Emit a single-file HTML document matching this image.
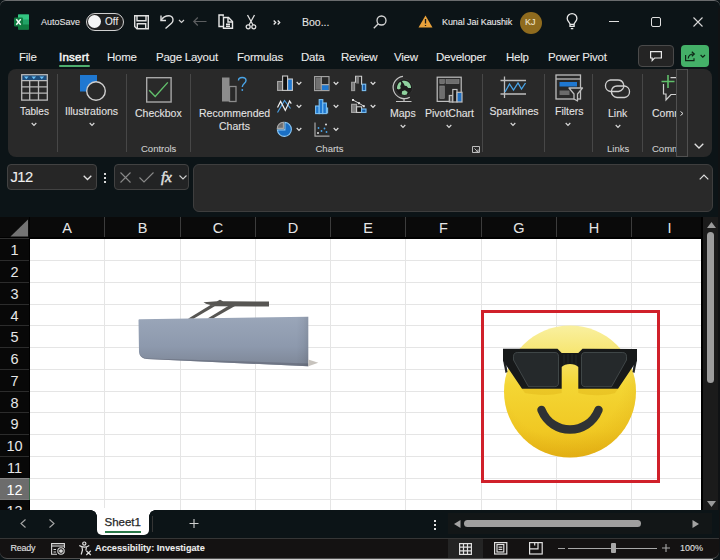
<!DOCTYPE html>
<html><head><meta charset="utf-8">
<style>
*{margin:0;padding:0;box-sizing:border-box}
html,body{width:720px;height:560px;overflow:hidden;background:#0c1417}
body{position:relative;font-family:"Liberation Sans",sans-serif;color:#e8e8e8}
.a{position:absolute}
.t{position:absolute;white-space:nowrap;line-height:1;-webkit-text-stroke:0.08px currentColor}
.h{-webkit-text-stroke:0}
svg{position:absolute;overflow:visible}
</style></head><body>

<!-- window frame -->
<div class="a" style="left:0;top:0;width:720px;height:560px;border-top:1px solid #6a6c6e;border-radius:6px;"></div>
<div class="a" style="left:718px;top:8px;width:2px;height:545px;background:#101214"></div>

<!-- ===== TITLE BAR ===== -->
<svg style="left:14px;top:14px" width="15" height="16" viewBox="0 0 15 16">
  <rect x="4" y="0.5" width="11" height="15" rx="1" fill="#21a366"/>
  <rect x="4" y="0.5" width="11" height="5" fill="#33c481"/>
  <rect x="4" y="10.5" width="11" height="5" fill="#107c41"/>
  <rect x="0" y="3.5" width="9" height="9" rx="1" fill="#107c41"/>
  <path d="M2.3 5.3 L6.7 10.7 M6.7 5.3 L2.3 10.7" stroke="#fff" stroke-width="1.4"/>
</svg>
<div class="t" style="left:41px;top:18px;font-size:9px;color:#e6e6e6">AutoSave</div>
<div class="a" style="left:85.5px;top:13px;width:38.5px;height:18px;border:1.3px solid #d0d0d0;border-radius:9px;background:#1f1f1f"></div>
<div class="a" style="left:88.2px;top:15px;width:13px;height:13px;border-radius:50%;background:#f4f4f4"></div>
<div class="t" style="left:105px;top:17px;font-size:10px;color:#ececec">Off</div>
<!-- save -->
<svg style="left:134px;top:15px" width="15" height="15" viewBox="0 0 15 15" fill="none" stroke="#e0e0e0" stroke-width="1.4">
  <path d="M0.7 0.7 H14.3 V13.8 H3 L0.7 11.5 Z"/><path d="M3 0.7 V5.8 H12 V0.7"/><path d="M3.3 13.8 V8.8 H11.7 V13.8"/>
</svg>
<!-- undo -->
<svg style="left:159px;top:14px" width="16" height="16" viewBox="0 0 16 16" fill="none" stroke="#e0e0e0" stroke-width="1.4">
  <path d="M2 1.5 V6.5 H7"/><path d="M2 6.5 C4 3 7 1.8 10 1.8 C12.5 1.8 14 3.8 14 6 C14 7.5 13.3 8.5 12.5 9.3 L6.5 14.5"/>
</svg>
<svg style="left:178px;top:19px" width="7" height="5" viewBox="0 0 7 5" fill="none" stroke="#d0d0d0" stroke-width="1.2"><path d="M1 1 L3.5 3.5 L6 1"/></svg>
<!-- back arrow -->
<svg style="left:193px;top:17px" width="14" height="9" viewBox="0 0 14 9" fill="none" stroke="#5c5e60" stroke-width="1.2"><path d="M0.8 4.5 H13.5 M4.8 0.5 L0.8 4.5 L4.8 8.5"/></svg>
<!-- copy -->
<svg style="left:218px;top:14px" width="16" height="16" viewBox="0 0 16 16" fill="none" stroke="#e8e8e8" stroke-width="1.4">
  <path d="M5.2 2.6 V1 H1 V12.5 H5"/><path d="M5.5 3.5 H10.5 L14.5 7.5 V14.3 H5.5 Z"/><path d="M8 10.3 H12 M8 12.3 H12"/><path d="M10 3.5 V8 H14.5"/>
</svg>
<!-- scissors -->
<svg style="left:245px;top:14px" width="12" height="16" viewBox="0 0 12 16" fill="none" stroke="#e0e0e0" stroke-width="1.3">
  <path d="M2.5 1 L8 11 M9.5 1 L4 11"/><circle cx="3.2" cy="12.8" r="2"/><circle cx="8.8" cy="12.8" r="2"/>
</svg>
<svg style="left:273px;top:20px" width="8" height="5" viewBox="0 0 8 5" fill="none" stroke="#e8e8e8" stroke-width="1.3"><path d="M0.7 0.5 L2.7 2.5 L0.7 4.5 M4.7 0.5 L6.7 2.5 L4.7 4.5"/></svg>
<div class="t" style="left:302px;top:17px;font-size:10.5px;color:#e6e6e6">Boo...</div>
<!-- search -->
<svg style="left:373px;top:15px" width="14" height="14" viewBox="0 0 14 14" fill="none" stroke="#d6d6d6" stroke-width="1.3">
  <circle cx="8.5" cy="5.5" r="4.5"/><path d="M5.3 8.7 L0.8 13.2"/>
</svg>
<!-- warning -->
<svg style="left:418px;top:15px" width="15" height="13" viewBox="0 0 15 13">
  <path d="M7.5 0.5 L14.5 12.5 H0.5 Z" fill="#e9a23b"/><path d="M7.5 4 V8.5 M7.5 10 V11" stroke="#1a1a1a" stroke-width="1.3"/>
</svg>
<div class="t" style="left:442px;top:17.5px;font-size:9px;color:#ececec;letter-spacing:-0.08px">Kunal Jai Kaushik</div>
<div class="a" style="left:520px;top:11.5px;width:22px;height:22px;border-radius:50%;background:#8f6b1e"></div>
<div class="t" style="left:525px;top:18px;font-size:9px;color:#f0e6d0">KJ</div>
<!-- bulb -->
<svg style="left:565px;top:12px" width="14" height="18" viewBox="565 12 14 18" fill="none" stroke="#e8e8e8" stroke-width="1.3">
  <path d="M570 26.3 V24.2 C570 22.6 567.2 21.2 567.2 18.4 A4.85 4.85 0 0 1 576.9 18.4 C576.9 21.2 574.1 22.6 574.1 24.2 V26.3 Z"/>
  <path d="M570 24.4 H574.1"/><path d="M570.8 28.6 H573.3"/>
</svg>
<!-- min / max / close -->
<div class="a" style="left:608.5px;top:20.6px;width:10px;height:1.4px;background:#e0e0e0"></div>
<div class="a" style="left:651px;top:17px;width:10px;height:9.5px;border:1.5px solid #e0e0e0;border-radius:2px"></div>
<svg style="left:693px;top:17px" width="10" height="10" viewBox="0 0 10 10" fill="none" stroke="#d8d8d8" stroke-width="1.1"><path d="M0.5 0.5 L9.5 9.5 M9.5 0.5 L0.5 9.5"/></svg>

<!-- ===== TABS ===== -->
<div class="t" style="left:19px;top:52px;font-size:11.5px;color:#ececec;letter-spacing:-0.25px">File</div>
<div class="t" style="left:59px;top:52px;font-size:11.5px;color:#f4f4f4;-webkit-text-stroke:0.5px #f4f4f4;letter-spacing:0.25px">Insert</div>
<div class="a" style="left:59px;top:65px;width:31px;height:2px;background:#4fae6f;border-radius:1px"></div>
<div class="t" style="left:107px;top:52px;font-size:11.5px;color:#ececec;letter-spacing:-0.25px">Home</div>
<div class="t" style="left:156px;top:52px;font-size:11.5px;color:#ececec;letter-spacing:-0.25px">Page Layout</div>
<div class="t" style="left:237px;top:52px;font-size:11.5px;color:#ececec;letter-spacing:-0.25px">Formulas</div>
<div class="t" style="left:301px;top:52px;font-size:11.5px;color:#ececec;letter-spacing:-0.25px">Data</div>
<div class="t" style="left:341px;top:52px;font-size:11.5px;color:#ececec;letter-spacing:-0.25px">Review</div>
<div class="t" style="left:394px;top:52px;font-size:11.5px;color:#ececec;letter-spacing:-0.25px">View</div>
<div class="t" style="left:436px;top:52px;font-size:11.5px;color:#ececec;letter-spacing:-0.25px">Developer</div>
<div class="t" style="left:506px;top:52px;font-size:11.5px;color:#ececec;letter-spacing:-0.25px">Help</div>
<div class="t" style="left:548px;top:52px;font-size:11.5px;color:#ececec;letter-spacing:-0.25px">Power Pivot</div>
<!-- comment btn -->
<div class="a" style="left:638px;top:45px;width:36px;height:22px;border:1px solid #4a4a4a;border-radius:4px;background:#242424"></div>
<svg style="left:650px;top:51px" width="12" height="11" viewBox="0 0 12 11" fill="none" stroke="#e8e8e8" stroke-width="1.2"><path d="M0.6 0.6 H11.4 V7 H4.5 L2.2 9.5 V7 H0.6 Z"/></svg>
<!-- share btn -->
<div class="a" style="left:681px;top:45px;width:28px;height:22px;border-radius:4px;background:#44b068"></div>
<svg style="left:684px;top:50px" width="24" height="14" viewBox="684 50 24 14" fill="none" stroke="#0e2616" stroke-width="1.2">
  <path d="M685.6 55 V60.6 H694 V58.2"/><path d="M688.2 58.5 C688.5 55.5 690.5 54 693.8 54"/><path d="M691.8 51.8 L694.3 54 L691.8 56.2"/><path d="M700.6 55 L702.8 57.2 L705 55"/>
</svg>

<!-- ===== RIBBON ===== -->
<div class="a" style="left:8px;top:69px;width:704px;height:88px;background:#292929;border-radius:8px"></div>


<!-- separators -->
<div class="a" style="left:57px;top:74px;width:1px;height:78px;background:#474747"></div>
<div class="a" style="left:126px;top:74px;width:1px;height:78px;background:#474747"></div>
<div class="a" style="left:190px;top:74px;width:1px;height:78px;background:#474747"></div>
<div class="a" style="left:482px;top:74px;width:1px;height:78px;background:#474747"></div>
<div class="a" style="left:544px;top:74px;width:1px;height:78px;background:#474747"></div>
<div class="a" style="left:592px;top:74px;width:1px;height:78px;background:#474747"></div>
<div class="a" style="left:642px;top:74px;width:1px;height:78px;background:#474747"></div>

<!-- Tables -->
<svg style="left:21px;top:74px" width="27" height="27" viewBox="0 0 27 27" fill="none" stroke="#bababa" stroke-width="1.3">
  <rect x="1.2" y="1.2" width="5" height="5" fill="#1d4d7c" stroke="none"/>
  <rect x="1.2" y="1.2" width="24.6" height="5.3" fill="#1d4d7c" stroke="none"/>
  <path d="M3 2.6 H7.6 L5.3 5.2 Z M10.5 2.6 H15.1 L12.8 5.2 Z M18.5 2.6 H23.1 L20.8 5.2 Z" fill="#6cc0f5" stroke="none"/>
  <rect x="0.7" y="0.7" width="25.6" height="25.4"/>
  <path d="M0.7 6.6 H26.3 M0.7 12.8 H26.3 M0.7 19.2 H26.3 M8.7 6.6 V26 M17.5 6.6 V26"/>
</svg>
<div class="t" style="left:20px;top:107px;font-size:10px;color:#e4e4e4">Tables</div>
<svg style="left:31px;top:122px" width="6" height="5" viewBox="0 0 6 5" fill="none" stroke="#d8d8d8" stroke-width="1.2"><path d="M0.7 1 L3 3.3 L5.3 1"/></svg>

<!-- Illustrations -->
<svg style="left:79px;top:74px" width="28" height="28" viewBox="0 0 28 28">
  <rect x="1" y="1" width="17" height="16.5" fill="#1f78d1"/>
  <circle cx="17" cy="17" r="9.3" fill="#292929" stroke="#cfcfcf" stroke-width="1.4"/>
</svg>
<div class="t" style="left:65px;top:106px;font-size:10.5px;color:#e4e4e4">Illustrations</div>
<svg style="left:89px;top:122px" width="6" height="5" viewBox="0 0 6 5" fill="none" stroke="#d8d8d8" stroke-width="1.2"><path d="M0.7 1 L3 3.3 L5.3 1"/></svg>

<!-- Checkbox -->
<svg style="left:146px;top:77px" width="26" height="26" viewBox="0 0 26 26" fill="none">
  <rect x="0.7" y="0.7" width="24.4" height="24.3" stroke="#a8a8a8" stroke-width="1.4"/>
  <path d="M3.2 13.2 L9.2 19.4 L21.8 5.4" stroke="#62c06c" stroke-width="1.4"/>
</svg>
<div class="t" style="left:135px;top:107.5px;font-size:10.5px;color:#e4e4e4">Checkbox</div>
<div class="t" style="left:141px;top:144px;font-size:9.5px;color:#cfcfcf">Controls</div>

<!-- Recommended charts -->
<svg style="left:221px;top:76px" width="28" height="27" viewBox="0 0 28 27">
  <rect x="1" y="1.5" width="7.5" height="24" fill="#8c8c8c"/>
  <rect x="8.5" y="10.5" width="6.5" height="15" fill="#292929" stroke="#8c8c8c" stroke-width="1.3"/>
  <path d="M17.5 4.5 C17.5 0.5 25 0.5 25 4.5 C25 7.5 21.3 7.5 21.3 11" fill="none" stroke="#4aa5e8" stroke-width="1.4"/>
  <circle cx="21.3" cy="14" r="0.9" fill="#4aa5e8"/>
</svg>
<div class="t" style="left:199px;top:107.5px;font-size:10.5px;color:#e4e4e4">Recommended</div>
<div class="t" style="left:219px;top:121px;font-size:10.5px;color:#e4e4e4">Charts</div>

<!-- small chart icons -->
<svg style="left:277px;top:75px" width="16" height="16" viewBox="0 0 16 16" stroke-width="1.1">
  <rect x="0.6" y="6.5" width="5" height="8.9" fill="#6b6b6b" stroke="#a8a8a8"/>
  <rect x="5.6" y="1" width="5" height="14.4" fill="#111" stroke="#c8c8c8"/>
  <rect x="10.6" y="4" width="4.8" height="11.4" fill="#1f78d1" stroke="#c8c8c8"/>
</svg>
<svg style="left:314px;top:76px" width="16" height="16" viewBox="0 0 16 16" stroke-width="1.1">
  <rect x="0.6" y="0.6" width="14.4" height="14" fill="#292929" stroke="#a8a8a8"/>
  <rect x="1.5" y="1.5" width="5.5" height="12.2" fill="#707070"/>
  <rect x="7.6" y="9" width="6.8" height="5" fill="#1f78d1"/>
  <path d="M7.3 0.6 V14.6 M7.3 8.6 H15" stroke="#a8a8a8" fill="none"/>
</svg>
<svg style="left:350px;top:75px" width="17" height="17" viewBox="350 75 17 17" stroke-width="1.1">
  <rect x="351.6" y="82.3" width="3" height="8.3" fill="#7a7a7a" stroke="#9a9a9a"/>
  <path d="M354.6 82.3 H355.6 V76.2 H361.6 V84.2 H362.3" fill="none" stroke="#d0d0d0"/>
  <rect x="356.2" y="76.8" width="2.8" height="6.8" fill="#7a7a7a"/>
  <rect x="362.3" y="84.2" width="3.4" height="6.4" fill="#1b5ea8" stroke="#7cc0f2"/>
</svg>
<svg style="left:276px;top:98px" width="17" height="16" viewBox="0 0 17 16" fill="none" stroke-width="1.2">
  <path d="M1.5 14.5 L8.5 2.5 L14.5 10.5" stroke="#4a9ee0"/>
  <path d="M1.5 9.5 L4.6 3.4 L9.3 12.4 L13.6 3 L15.3 5.6" stroke="#f0f0f0"/>
</svg>
<svg style="left:315px;top:98.5px" width="13" height="15" viewBox="0 0 13 15" stroke-width="1.1">
  <rect x="0.6" y="7" width="3.6" height="7.6" fill="#1f78d1" stroke="#7cc0f2"/>
  <rect x="4.2" y="0.6" width="3.6" height="14" fill="#1f78d1" stroke="#7cc0f2"/>
  <rect x="7.8" y="4" width="3.6" height="10.6" fill="#1f78d1" stroke="#7cc0f2"/>
  <path d="M11.4 9 H12.6 V14.6" fill="none" stroke="#7cc0f2"/>
</svg>
<svg style="left:350px;top:98px" width="17" height="16" viewBox="350 98 17 16" stroke-width="1.1">
  <rect x="351.6" y="104.3" width="5" height="8.1" fill="#7a7a7a" stroke="#a8a8a8"/>
  <rect x="356.6" y="106.8" width="5" height="5.6" fill="#141414" stroke="#d0d0d0"/>
  <rect x="361.6" y="109" width="4.4" height="3.4" fill="#1b5ea8" stroke="#7cc0f2"/>
  <path d="M353 100 L359 103.2 L363.8 106.2" fill="none" stroke="#d8d8d8" stroke-width="1"/>
  <rect x="352" y="99" width="2" height="2" fill="#e0e0e0"/><rect x="358" y="102.2" width="2" height="2" fill="#e0e0e0"/><rect x="362.8" y="105.2" width="2" height="2" fill="#e0e0e0"/>
</svg>
<svg style="left:276px;top:121px" width="17" height="17" viewBox="0 0 17 17" stroke-width="1.1">
  <path d="M8.9 1.4 A7 7 0 1 1 1.4 8.9 H8.9 Z" fill="#1a6fc4" stroke="#8cc8f5"/>
  <path d="M7.4 7.4 V1.3 A6.2 6.2 0 0 0 1.3 7.4 Z" fill="#6e6e6e" stroke="#a8a8a8"/>
</svg>
<svg style="left:314px;top:121.5px" width="16" height="15" viewBox="0 0 16 15" fill="none">
  <path d="M1 0.5 V14.2 H15.5" stroke="#a8a8a8" stroke-width="1.2"/>
  <circle cx="4.5" cy="6" r="0.9" fill="#4aa5e8"/><circle cx="7.5" cy="9" r="0.9" fill="#4aa5e8"/>
  <circle cx="10.5" cy="6.5" r="0.9" fill="#4aa5e8"/><circle cx="12.5" cy="10" r="0.9" fill="#4aa5e8"/>
  <circle cx="12" cy="2.5" r="1" fill="#e0e0e0"/><circle cx="4" cy="11" r="1" fill="#e0e0e0"/>
</svg>
<!-- small chevrons -->
<svg style="left:296px;top:80.5px" width="6" height="5" viewBox="0 0 6 5" fill="none" stroke="#e0e0e0" stroke-width="1.2"><path d="M0.7 1 L3 3.3 L5.3 1"/></svg>
<svg style="left:333px;top:80.5px" width="6" height="5" viewBox="0 0 6 5" fill="none" stroke="#e0e0e0" stroke-width="1.2"><path d="M0.7 1 L3 3.3 L5.3 1"/></svg>
<svg style="left:370px;top:80.5px" width="6" height="5" viewBox="0 0 6 5" fill="none" stroke="#e0e0e0" stroke-width="1.2"><path d="M0.7 1 L3 3.3 L5.3 1"/></svg>
<svg style="left:296px;top:103.5px" width="6" height="5" viewBox="0 0 6 5" fill="none" stroke="#e0e0e0" stroke-width="1.2"><path d="M0.7 1 L3 3.3 L5.3 1"/></svg>
<svg style="left:333px;top:103.5px" width="6" height="5" viewBox="0 0 6 5" fill="none" stroke="#e0e0e0" stroke-width="1.2"><path d="M0.7 1 L3 3.3 L5.3 1"/></svg>
<svg style="left:370px;top:103.5px" width="6" height="5" viewBox="0 0 6 5" fill="none" stroke="#e0e0e0" stroke-width="1.2"><path d="M0.7 1 L3 3.3 L5.3 1"/></svg>
<svg style="left:296px;top:126.5px" width="6" height="5" viewBox="0 0 6 5" fill="none" stroke="#e0e0e0" stroke-width="1.2"><path d="M0.7 1 L3 3.3 L5.3 1"/></svg>
<svg style="left:333px;top:126.5px" width="6" height="5" viewBox="0 0 6 5" fill="none" stroke="#e0e0e0" stroke-width="1.2"><path d="M0.7 1 L3 3.3 L5.3 1"/></svg>
<div class="t" style="left:315.5px;top:144px;font-size:9.5px;color:#cfcfcf">Charts</div>

<!-- Maps -->
<svg style="left:388px;top:72px" width="30" height="32" viewBox="388 72 30 32">
  <circle cx="404" cy="87.5" r="8.6" fill="#1c1c1c" stroke="#3a3a3a" stroke-width="0.6"/>
  <g transform="translate(404 87.5) scale(0.85) translate(-404 -87.5)">
  <path d="M401.5 80 C403 79.3 406 79.3 408 80.3 L410 82 C411.5 84 412.3 86 412.3 88 L409 88 L407 85.8 L404.8 85.3 L403.8 83 Z" fill="#8fd19e"/>
  <path d="M396.3 85 C397 83 398.5 81.5 400 80.8 L400.8 83 L399.5 86 L400.3 88.3 L398 89.8 L395.8 89 C395.6 87.5 395.8 86 396.3 85 Z" fill="#8fd19e"/>
  <path d="M401.8 91.8 L405 90.8 L408.3 92.8 L407.3 95.8 C405.5 96.5 403 96.3 401.3 95.5 Z" fill="#8fd19e"/>
  </g>
  <path d="M403 76.3 A11.2 11.2 0 1 0 409.8 97.2 M404 98.8 V101.5 M396 101.5 H411.5" fill="none" stroke="#c4c4c4" stroke-width="1.2"/>
</svg>
<div class="t" style="left:390px;top:108px;font-size:10.5px;color:#e4e4e4">Maps</div>
<svg style="left:399.5px;top:123.5px" width="6" height="5" viewBox="0 0 6 5" fill="none" stroke="#d8d8d8" stroke-width="1.2"><path d="M0.7 1 L3 3.3 L5.3 1"/></svg>

<!-- PivotChart -->
<svg style="left:436px;top:76px" width="28" height="28" viewBox="436 76 28 28" stroke-width="1.2">
  <rect x="437.2" y="77.2" width="24" height="24.2" fill="none" stroke="#c0c0c0"/>
  <rect x="439.8" y="79.6" width="4.5" height="4" fill="#6e6e6e" stroke="#8a8a8a" stroke-width="0.6"/>
  <rect x="446" y="79.6" width="13" height="4" fill="#6e6e6e" stroke="#8a8a8a" stroke-width="0.6"/>
  <rect x="439.8" y="86" width="4.5" height="12.5" fill="#6e6e6e" stroke="#8a8a8a" stroke-width="0.6"/>
  <rect x="449.3" y="95.5" width="3.5" height="6.5" fill="#5a5a5a" stroke="#c0c0c0"/>
  <rect x="452.8" y="89.5" width="4.2" height="12.5" fill="#1a1a1a" stroke="#c0c0c0"/>
  <rect x="457" y="92.3" width="5" height="9.7" fill="#1f6fc2" stroke="#c0c0c0"/>
</svg>
<div class="t" style="left:425px;top:108px;font-size:10.5px;color:#e4e4e4">PivotChart</div>
<svg style="left:446px;top:124px" width="6" height="5" viewBox="0 0 6 5" fill="none" stroke="#d8d8d8" stroke-width="1.2"><path d="M0.7 1 L3 3.3 L5.3 1"/></svg>
<svg style="left:471.5px;top:145.5px" width="8" height="7" viewBox="0 0 8 7" fill="none" stroke="#bdbdbd" stroke-width="1"><path d="M0.5 6.5 V0.5 H7.5 V6.5 Z M2.5 2.5 L6 6 M6 3.5 V6 H3.5"/></svg>

<!-- Sparklines -->
<svg style="left:500px;top:76px" width="27" height="23" viewBox="0 0 27 23" fill="none" stroke-width="1.3">
  <path d="M0.5 4.5 H26 M0.5 18 H26 M4.5 0.5 V22" stroke="#bdbdbd"/>
  <path d="M5 16 L9.5 8 L13.5 14 L18 7 L21.5 13 L25.5 7" stroke="#4aa5e8"/>
</svg>
<div class="t" style="left:489.5px;top:106px;font-size:10.5px;color:#e4e4e4">Sparklines</div>
<svg style="left:510px;top:122px" width="6" height="5" viewBox="0 0 6 5" fill="none" stroke="#d8d8d8" stroke-width="1.2"><path d="M0.7 1 L3 3.3 L5.3 1"/></svg>

<!-- Filters -->
<svg style="left:555px;top:74px" width="29" height="28" viewBox="0 0 29 28" stroke-width="1.3">
  <rect x="1" y="1" width="24.5" height="24" fill="none" stroke="#bdbdbd"/>
  <path d="M1 5 H25.5" stroke="#bdbdbd"/>
  <rect x="4.5" y="8" width="17.5" height="4.5" fill="#1f78d1"/>
  <rect x="4.5" y="16.5" width="10" height="4.5" fill="#6b6b6b"/>
  <path d="M14 14 H27.5 L22.5 20 V27 L19 25 V20 Z" fill="#292929" stroke="#bdbdbd" stroke-linejoin="round"/>
</svg>
<div class="t" style="left:555px;top:106px;font-size:10.5px;color:#e4e4e4">Filters</div>
<svg style="left:565px;top:122px" width="6" height="5" viewBox="0 0 6 5" fill="none" stroke="#d8d8d8" stroke-width="1.2"><path d="M0.7 1 L3 3.3 L5.3 1"/></svg>

<!-- Link -->
<svg style="left:604px;top:79px" width="28" height="20" viewBox="0 0 28 20" fill="none" stroke="#d0d0d0" stroke-width="1.3">
  <path d="M10 12.5 H6.5 A5.8 5.8 0 0 1 6.5 1 H14 A5.8 5.8 0 0 1 19.5 5"/>
  <path d="M14 7 H20.5 A5.8 5.8 0 0 1 20.5 18.5 H13 A5.8 5.8 0 0 1 7.5 12"/>
  <path d="M10 12.5 H14.5 A5.8 5.8 0 0 0 19.5 5"/>
  <path d="M14 7 H13 A5.8 5.8 0 0 0 7.5 12"/>
</svg>
<div class="t" style="left:608px;top:108px;font-size:10.5px;color:#e4e4e4">Link</div>
<svg style="left:614.5px;top:123.5px" width="6" height="5" viewBox="0 0 6 5" fill="none" stroke="#d8d8d8" stroke-width="1.2"><path d="M0.7 1 L3 3.3 L5.3 1"/></svg>
<div class="t" style="left:607px;top:144px;font-size:9.5px;color:#cfcfcf">Links</div>

<!-- Comments -->
<svg style="left:660px;top:74px" width="20" height="28" viewBox="0 0 20 28" fill="none" stroke-width="1.4">
  <path d="M3.5 10 V20 H6 V26 L11 20.5 H16 M10.5 3.7 H16" stroke="#d0d0d0" stroke-width="1.2"/>
  <path d="M8 1 V14 M1.5 7.5 H14.5" stroke="#5fbf6a" stroke-width="1.6"/>
</svg>
<div class="t" style="left:652px;top:108px;font-size:10.5px;color:#e4e4e4">Comm</div>
<div class="t" style="left:652px;top:144px;font-size:9.5px;color:#cfcfcf">Comm</div>
<!-- ribbon scroll -->
<div class="a" style="left:676px;top:69px;width:12px;height:88px;background:#2b2b2b;border:1px solid #505050"></div>
<svg style="left:680px;top:111px" width="4" height="5" viewBox="0 0 4 5" fill="none" stroke="#e0e0e0" stroke-width="1"><path d="M0.5 0.5 L3 2.5 L0.5 4.5"/></svg>
<svg style="left:694px;top:142.5px" width="10" height="6" viewBox="0 0 10 6" fill="none" stroke="#e0e0e0" stroke-width="1.3"><path d="M0.7 0.7 L5 5 L9.3 0.7"/></svg>


<!-- ===== FORMULA BAR ===== -->
<div class="a" style="left:7px;top:164px;width:90px;height:26px;background:#262626;border:1px solid #424242;border-radius:4px"></div>
<div class="t" style="left:10.5px;top:170px;font-size:14.8px;color:#f0f0f0;letter-spacing:-0.6px">J12</div>
<svg style="left:83px;top:175px" width="9" height="6" viewBox="0 0 9 6" fill="none" stroke="#e0e0e0" stroke-width="1.3"><path d="M0.7 0.7 L4.5 4.5 L8.3 0.7"/></svg>
<div class="a" style="left:104px;top:173px;width:2px;height:2px;background:#d8d8d8"></div>
<div class="a" style="left:104px;top:177px;width:2px;height:2px;background:#d8d8d8"></div>
<div class="a" style="left:104px;top:181px;width:2px;height:2px;background:#d8d8d8"></div>
<div class="a" style="left:114px;top:164px;width:75px;height:26px;background:#222324;border:1px solid #424242;border-radius:4px"></div>
<svg style="left:120px;top:172px" width="11" height="11" viewBox="0 0 11 11" fill="none" stroke="#8a8a8a" stroke-width="1.1"><path d="M0.5 0.5 L10.5 10.5 M10.5 0.5 L0.5 10.5"/></svg>
<svg style="left:139px;top:172px" width="15" height="11" viewBox="0 0 15 11" fill="none" stroke="#8a8a8a" stroke-width="1.1"><path d="M0.5 5.5 L5 10 L14.5 0.5"/></svg>
<div class="t" style="left:161px;top:168.5px;font-size:15.5px;font-family:'Liberation Serif',serif;font-style:italic;color:#e0e0e0;letter-spacing:-0.2px;-webkit-text-stroke:0.45px #e0e0e0">fx</div>
<svg style="left:179px;top:175px" width="8" height="5" viewBox="0 0 8 5" fill="none" stroke="#d0d0d0" stroke-width="1.1"><path d="M0.5 0.5 L4 4 L7.5 0.5"/></svg>
<div class="a" style="left:193px;top:164px;width:520px;height:48px;background:#292929;border:1px solid #3e3e3e;border-radius:6px"></div>
<svg style="left:699px;top:174px" width="10" height="6" viewBox="0 0 10 6" fill="none" stroke="#e0e0e0" stroke-width="1.2"><path d="M0.7 5.3 L5 1 L9.3 5.3"/></svg>

<!-- ===== GRID ===== -->
<div class="a" style="left:0;top:217px;width:701px;height:22px;background:#0a0a0a"></div>
<div class="a" style="left:0;top:237px;width:701px;height:2px;background:#000"></div>
<div class="a" style="left:0;top:238px;width:29px;height:1px;background:#303030"></div>
<div class="a" style="left:0;top:239px;width:30px;height:271px;background:#080808"></div>
<div class="a" style="left:29px;top:217px;width:1px;height:293px;background:#000"></div>
<div class="a" style="left:30px;top:239px;width:671px;height:271px;background:#fff"></div>
<svg style="left:10px;top:219px" width="19" height="18" viewBox="0 0 19 18"><path d="M18 0.5 V17.5 H0.5 Z" fill="#737373"/></svg>
<div class="a" style="left:701px;top:217px;width:2px;height:293px;background:#000"></div>
<div class="a" style="left:703px;top:217px;width:15px;height:293px;background:#1b1b1b"></div>

<div class="a" style="left:104px;top:217px;width:1px;height:20px;background:#3c3c3c"></div>
<div class="a" style="left:104px;top:239px;width:1px;height:271px;background:#e5e5e5"></div>
<div class="a" style="left:180px;top:217px;width:1px;height:20px;background:#3c3c3c"></div>
<div class="a" style="left:180px;top:239px;width:1px;height:271px;background:#e5e5e5"></div>
<div class="a" style="left:255px;top:217px;width:1px;height:20px;background:#3c3c3c"></div>
<div class="a" style="left:255px;top:239px;width:1px;height:271px;background:#e5e5e5"></div>
<div class="a" style="left:330px;top:217px;width:1px;height:20px;background:#3c3c3c"></div>
<div class="a" style="left:330px;top:239px;width:1px;height:271px;background:#e5e5e5"></div>
<div class="a" style="left:405px;top:217px;width:1px;height:20px;background:#3c3c3c"></div>
<div class="a" style="left:405px;top:239px;width:1px;height:271px;background:#e5e5e5"></div>
<div class="a" style="left:481px;top:217px;width:1px;height:20px;background:#3c3c3c"></div>
<div class="a" style="left:481px;top:239px;width:1px;height:271px;background:#e5e5e5"></div>
<div class="a" style="left:556px;top:217px;width:1px;height:20px;background:#3c3c3c"></div>
<div class="a" style="left:556px;top:239px;width:1px;height:271px;background:#e5e5e5"></div>
<div class="a" style="left:631px;top:217px;width:1px;height:20px;background:#3c3c3c"></div>
<div class="a" style="left:631px;top:239px;width:1px;height:271px;background:#e5e5e5"></div>
<div class="t h" style="left:30px;top:221px;width:74px;text-align:center;font-size:14.5px;color:#e6e6e6">A</div>
<div class="t h" style="left:105px;top:221px;width:75px;text-align:center;font-size:14.5px;color:#e6e6e6">B</div>
<div class="t h" style="left:181px;top:221px;width:74px;text-align:center;font-size:14.5px;color:#e6e6e6">C</div>
<div class="t h" style="left:256px;top:221px;width:74px;text-align:center;font-size:14.5px;color:#e6e6e6">D</div>
<div class="t h" style="left:331px;top:221px;width:74px;text-align:center;font-size:14.5px;color:#e6e6e6">E</div>
<div class="t h" style="left:406px;top:221px;width:75px;text-align:center;font-size:14.5px;color:#e6e6e6">F</div>
<div class="t h" style="left:482px;top:221px;width:74px;text-align:center;font-size:14.5px;color:#e6e6e6">G</div>
<div class="t h" style="left:557px;top:221px;width:74px;text-align:center;font-size:14.5px;color:#e6e6e6">H</div>
<div class="t h" style="left:632px;top:221px;width:75px;text-align:center;font-size:14.5px;color:#e6e6e6">I</div>
<div class="a" style="left:30px;top:260px;width:671px;height:1px;background:#e5e5e5"></div>
<div class="a" style="left:0;top:260px;width:29px;height:1px;background:#2c2c2c"></div>
<div class="a" style="left:30px;top:282px;width:671px;height:1px;background:#e5e5e5"></div>
<div class="a" style="left:0;top:282px;width:29px;height:1px;background:#2c2c2c"></div>
<div class="a" style="left:30px;top:304px;width:671px;height:1px;background:#e5e5e5"></div>
<div class="a" style="left:0;top:304px;width:29px;height:1px;background:#2c2c2c"></div>
<div class="a" style="left:30px;top:325px;width:671px;height:1px;background:#e5e5e5"></div>
<div class="a" style="left:0;top:325px;width:29px;height:1px;background:#2c2c2c"></div>
<div class="a" style="left:30px;top:347px;width:671px;height:1px;background:#e5e5e5"></div>
<div class="a" style="left:0;top:347px;width:29px;height:1px;background:#2c2c2c"></div>
<div class="a" style="left:30px;top:369px;width:671px;height:1px;background:#e5e5e5"></div>
<div class="a" style="left:0;top:369px;width:29px;height:1px;background:#2c2c2c"></div>
<div class="a" style="left:30px;top:391px;width:671px;height:1px;background:#e5e5e5"></div>
<div class="a" style="left:0;top:391px;width:29px;height:1px;background:#2c2c2c"></div>
<div class="a" style="left:30px;top:412px;width:671px;height:1px;background:#e5e5e5"></div>
<div class="a" style="left:0;top:412px;width:29px;height:1px;background:#2c2c2c"></div>
<div class="a" style="left:30px;top:434px;width:671px;height:1px;background:#e5e5e5"></div>
<div class="a" style="left:0;top:434px;width:29px;height:1px;background:#2c2c2c"></div>
<div class="a" style="left:30px;top:456px;width:671px;height:1px;background:#e5e5e5"></div>
<div class="a" style="left:0;top:456px;width:29px;height:1px;background:#2c2c2c"></div>
<div class="a" style="left:30px;top:478px;width:671px;height:1px;background:#e5e5e5"></div>
<div class="a" style="left:0;top:478px;width:29px;height:1px;background:#2c2c2c"></div>
<div class="a" style="left:30px;top:499px;width:671px;height:1px;background:#e5e5e5"></div>
<div class="a" style="left:0;top:499px;width:29px;height:1px;background:#2c2c2c"></div>
<div class="t h" style="left:0;top:243px;width:29px;text-align:center;font-size:14.5px;color:#e6e6e6">1</div>
<div class="t h" style="left:0;top:265px;width:29px;text-align:center;font-size:14.5px;color:#e6e6e6">2</div>
<div class="t h" style="left:0;top:287px;width:29px;text-align:center;font-size:14.5px;color:#e6e6e6">3</div>
<div class="t h" style="left:0;top:309px;width:29px;text-align:center;font-size:14.5px;color:#e6e6e6">4</div>
<div class="t h" style="left:0;top:330px;width:29px;text-align:center;font-size:14.5px;color:#e6e6e6">5</div>
<div class="t h" style="left:0;top:352px;width:29px;text-align:center;font-size:14.5px;color:#e6e6e6">6</div>
<div class="t h" style="left:0;top:374px;width:29px;text-align:center;font-size:14.5px;color:#e6e6e6">7</div>
<div class="t h" style="left:0;top:396px;width:29px;text-align:center;font-size:14.5px;color:#e6e6e6">8</div>
<div class="t h" style="left:0;top:417px;width:29px;text-align:center;font-size:14.5px;color:#e6e6e6">9</div>
<div class="t h" style="left:0;top:439px;width:29px;text-align:center;font-size:14.5px;color:#e6e6e6">10</div>
<div class="t h" style="left:0;top:461px;width:29px;text-align:center;font-size:14.5px;color:#e6e6e6">11</div>
<div class="a" style="left:0;top:478px;width:29px;height:22px;background:#6c6c6c;border-top:1px solid #888;border-bottom:1px solid #7a7a7a"></div>
<div class="a" style="left:29px;top:478px;width:1px;height:22px;background:#3a6a48"></div>
<div class="t h" style="left:0;top:483px;width:29px;text-align:center;font-size:14.5px;color:#ffffff">12</div>
<div class="t h" style="left:0;top:504px;width:29px;text-align:center;font-size:14.5px;color:#e6e6e6">13</div>

<!-- vertical scrollbar -->
<svg style="left:706.5px;top:222px" width="9" height="6" viewBox="0 0 9 6"><path d="M4.5 0 L9 6 H0 Z" fill="#9a9a9a"/></svg>
<div class="a" style="left:707px;top:232px;width:7px;height:151px;background:#9d9d9d;border-radius:3.5px"></div>
<svg style="left:706.5px;top:501px" width="9" height="6" viewBox="0 0 9 6"><path d="M0 0 H9 L4.5 6 Z" fill="#9a9a9a"/></svg>

<!-- ===== SHEET TAB BAR ===== -->
<div class="a" style="left:0;top:510px;width:719px;height:28px;background:#0c1417"></div>
<div class="a" style="left:448px;top:513px;width:264px;height:21px;background:#121617"></div>
<div class="a" style="left:0;top:538px;width:719px;height:1px;background:#363636"></div>
<svg style="left:20px;top:519px" width="6" height="9" viewBox="0 0 6 9" fill="none" stroke="#a8a8a8" stroke-width="1.1"><path d="M5.5 0.5 L1 4.5 L5.5 8.5"/></svg>
<svg style="left:49px;top:519px" width="6" height="9" viewBox="0 0 6 9" fill="none" stroke="#a8a8a8" stroke-width="1.1"><path d="M0.5 0.5 L5 4.5 L0.5 8.5"/></svg>
<div class="a" style="left:97px;top:508px;width:51.5px;height:27px;background:#fff;border-radius:0 0 5px 5px"></div>
<div class="a" style="left:91px;top:510px;width:6px;height:6px;background:radial-gradient(circle at 0 100%, #0c1417 5.5px, #fff 6px)"></div>
<div class="a" style="left:148.5px;top:510px;width:6px;height:6px;background:radial-gradient(circle at 100% 100%, #0c1417 5.5px, #fff 6px)"></div>
<div class="t" style="left:104.5px;top:517px;font-size:11.5px;color:#262626;-webkit-text-stroke:0.25px #262626">Sheet1</div>
<div class="a" style="left:104.5px;top:530.5px;width:36.5px;height:2px;background:#2b7a4b"></div>
<div class="a" style="left:151.5px;top:516px;width:1px;height:16px;background:#353535"></div>
<svg style="left:189px;top:519px" width="10" height="9" viewBox="0 0 10 9" fill="none" stroke="#d0d0d0" stroke-width="1.1"><path d="M5 0 V9 M0.5 4.5 H9.5"/></svg>
<div class="a" style="left:434px;top:520px;width:2px;height:2px;background:#e0e0e0"></div>
<div class="a" style="left:434px;top:524px;width:2px;height:2px;background:#e0e0e0"></div>
<div class="a" style="left:434px;top:527.5px;width:2px;height:2px;background:#e0e0e0"></div>
<svg style="left:453.5px;top:520px" width="7" height="8" viewBox="0 0 7 8"><path d="M0 4 L6.5 0 V8 Z" fill="#a3a3a3"/></svg>
<div class="a" style="left:464px;top:520px;width:177px;height:7px;background:#9f9f9f;border-radius:3.5px"></div>
<svg style="left:691.5px;top:520px" width="7" height="8" viewBox="0 0 7 8"><path d="M7 4 L0.5 0 V8 Z" fill="#a3a3a3"/></svg>

<!-- ===== STATUS BAR ===== -->
<div class="a" style="left:0;top:539px;width:719px;height:19.5px;background:#141212;border-bottom:1px solid #505050;border-radius:0 0 7px 7px"></div>
<div class="a" style="left:448px;top:539px;width:35px;height:19px;background:#242424"></div>
<div class="t" style="left:10.5px;top:543.5px;font-size:9px;color:#e0e0e0;letter-spacing:-0.25px">Ready</div>
<svg style="left:50.5px;top:543px" width="14" height="12" viewBox="0 0 14 12" fill="none" stroke="#d8d8d8" stroke-width="1.1">
  <path d="M6 11.2 H0.6 V0.6 H13.4 V5"/><path d="M0.6 3 H13.4"/><path d="M2.5 6.5 H5 M2.5 9 H5"/>
  <circle cx="10" cy="8" r="3.2"/><circle cx="10" cy="8" r="1.3" fill="#d8d8d8"/>
</svg>
<svg style="left:78px;top:541px" width="15" height="15" viewBox="78 541 15 15" fill="none" stroke="#e0e0e0" stroke-width="1.2" stroke-linejoin="round">
  <circle cx="84.3" cy="543.6" r="1.6"/>
  <path d="M79.3 545.6 C81 546.8 82.5 547.2 84.3 547.2 C86 547.2 87.5 546.8 89.3 545.6"/>
  <path d="M82 547.2 L82.5 550 L81.2 554.5 M86.5 547.2 L85.8 550.5"/>
  <path d="M86.3 550.8 L90.8 555 M90.8 550.8 L86.3 555"/>
</svg>
<div class="t" style="left:95px;top:543.5px;font-size:9.2px;font-weight:bold;color:#ececec">Accessibility: Investigate</div>
<svg style="left:459px;top:542.5px" width="13" height="12" viewBox="0 0 13 12" fill="none" stroke="#e0e0e0" stroke-width="1.2">
  <rect x="0.6" y="0.6" width="11.8" height="10.8"/><path d="M0.6 4.2 H12.4 M0.6 7.8 H12.4 M4.5 0.6 V11.4 M8.5 0.6 V11.4"/>
</svg>
<svg style="left:494px;top:542px" width="14" height="13" viewBox="0 0 14 13" fill="none" stroke="#e0e0e0" stroke-width="1.2">
  <rect x="0.6" y="0.6" width="12.2" height="11.4"/><rect x="3" y="2.5" width="6.8" height="7.5"/><path d="M4.5 5.2 H8.3 M4.5 7.3 H8.3"/>
</svg>
<svg style="left:529px;top:542px" width="14" height="13" viewBox="0 0 14 13" fill="none" stroke="#e0e0e0" stroke-width="1.2">
  <rect x="0.6" y="0.6" width="12.6" height="11.4"/><path d="M0.6 6.8 H9 V0.6 M5.7 0.6 V3.5"/>
</svg>
<div class="a" style="left:558px;top:547.5px;width:7px;height:1px;background:#a0a0a0"></div>
<div class="a" style="left:568px;top:547.5px;width:89px;height:1.3px;background:#a8a8a8"></div>
<div class="a" style="left:611px;top:543px;width:5px;height:10px;background:#a8a8a8;border-radius:1px"></div>
<svg style="left:661.5px;top:544px" width="8" height="8" viewBox="0 0 8 8" fill="none" stroke="#a8a8a8" stroke-width="1.1"><path d="M4 0 V8 M0 4 H8"/></svg>
<div class="t" style="left:680px;top:544px;font-size:9px;color:#e0e0e0">100%</div>
<div class="a" style="left:80px;top:559px;width:633px;height:1px;background:#d0d0d0"></div>


<!-- ===== 3D OBJECT ===== -->
<svg style="left:130px;top:295px" width="195" height="75" viewBox="130 295 195 75">
  <defs>
    <linearGradient id="sheetg" x1="0" y1="0" x2="0" y2="1">
      <stop offset="0" stop-color="#9aa6b9"/>
      <stop offset="0.6" stop-color="#8d99ad"/>
      <stop offset="1" stop-color="#7d8696"/>
    </linearGradient>
    <linearGradient id="sheetr" x1="0" y1="0" x2="1" y2="0">
      <stop offset="0" stop-color="#000" stop-opacity="0"/>
      <stop offset="0.6" stop-color="#000" stop-opacity="0.04"/>
      <stop offset="1" stop-color="#000" stop-opacity="0.1"/>
    </linearGradient>
  </defs>
  <path d="M203.5 302.3 L217 301.3 L220 299.8 L223 301.2 L269 301.5 L269 306.5 L215 306.2 L206 303.8 Z" fill="#575653"/>
  <path d="M188 318.8 L210.5 305 L216 305.5 L193.5 318.8 Z" fill="#575653"/>
  <path d="M207.5 318.5 L229 305.5 L235 306 L213 318.5 Z" fill="#575653"/>
  <path d="M138.5 320.2 C138.5 319.6 139 319.2 140 319.2 L308.3 316.8 L308.3 366.3 L147 359 C142 358.5 139.3 356 139 352 Z" fill="url(#sheetg)"/>
  <path d="M140 354 C141 357 144 358.3 148 358.5 L308.3 363.5 L308.3 366.3 L147 359 C143 358.7 140.5 357 140 354 Z" fill="#6a7180" opacity="0.8"/>
  <path d="M296 317 L308.3 316.8 L308.3 366.3 L296 365.7 Z" fill="url(#sheetr)"/>
  <path d="M308.3 359.5 L318.3 362.8 L308.3 366.3 Z" fill="#c7c3bd"/>
</svg>

<!-- ===== EMOJI ===== -->
<div class="a" style="left:481px;top:309.5px;width:178.5px;height:173.5px;border:3px solid #d0202a"></div>
<svg style="left:490px;top:318px" width="160" height="150" viewBox="490 318 160 150">
  <defs>
    <linearGradient id="facel" x1="0" y1="0" x2="0" y2="1">
      <stop offset="0" stop-color="#f9f0a0"/>
      <stop offset="0.2" stop-color="#f7e673"/>
      <stop offset="0.45" stop-color="#f4d634"/>
      <stop offset="0.8" stop-color="#f0c823"/>
      <stop offset="1" stop-color="#e6b416"/>
    </linearGradient>
    <radialGradient id="faceshade" cx="0.45" cy="0.4" r="0.6">
      <stop offset="0.75" stop-color="#c98a00" stop-opacity="0"/>
      <stop offset="1" stop-color="#c98a00" stop-opacity="0.15"/>
    </radialGradient>
  </defs>
  <circle cx="570" cy="391.5" r="66" fill="url(#facel)"/>
  <circle cx="570" cy="391.5" r="66" fill="url(#faceshade)"/>
  <path d="M522 389 L561.7 389 L561.7 393 C550 396 535 395 525 393 Z M578.3 389 L618 389 L615 393 C605 396 590 396 578.3 393 Z" fill="#d9ac10" opacity="0.35"/>
  <path d="M541.5 410 C552 436 588 436 598.5 410" fill="none" stroke="#2f3234" stroke-width="8.5" stroke-linecap="round"/>
  <path d="M503 360 L505.5 373 L507.5 372 L505.5 359 Z" fill="#202324"/>
  <path d="M637 360 L634.5 373 L632.5 372 L634.5 359 Z" fill="#202324"/>
  <path d="M503 348.8 L557.5 348.8 L561.7 353 L578.3 353 L582.5 348.8 L637 349 L637 360.5 L618 388.8 L578.3 388.8 L578.3 367 C575 363 565 363 561.7 367 L561.7 388.8 L522 388.8 L503 360.5 Z" fill="#17191a"/>
  <path d="M513.5 356.5 C513.5 353.8 515 352.5 517.5 352.5 L555 352.5 C557.5 352.5 558.5 354 558.5 356.5 L558.5 383 C558.5 385.5 557 386.7 554.5 386.7 L528.5 386.7 L513.5 360 Z" fill="#25292b" stroke="#586062" stroke-width="0.6"/>
  <path d="M626.5 356.5 C626.5 353.8 625 352.5 622.5 352.5 L585 352.5 C582.5 352.5 581.5 354 581.5 356.5 L581.5 383 C581.5 385.5 583 386.7 585.5 386.7 L611.5 386.7 L626.5 360 Z" fill="#25292b" stroke="#586062" stroke-width="0.6"/>
  <path d="M564 354.5 V365 M568 354 V363.5 M572 354 V363.5 M576 354.5 V365" stroke="#2a2d2f" stroke-width="0.8"/>
</svg>

</body></html>
